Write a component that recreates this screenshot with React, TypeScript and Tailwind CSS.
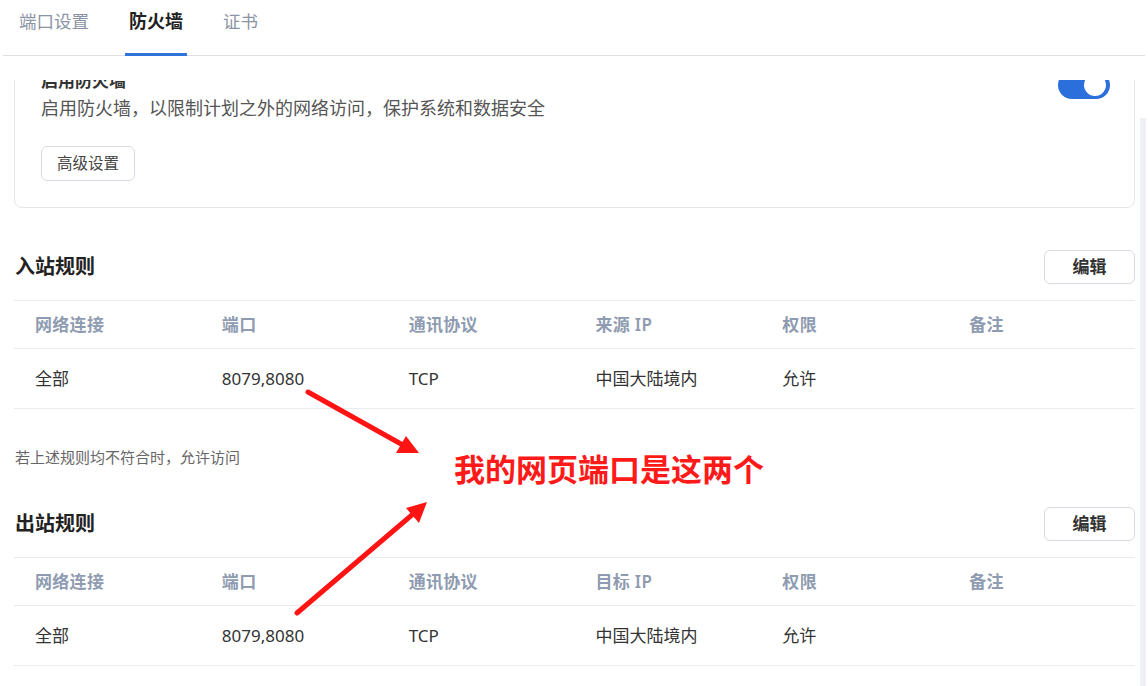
import React from "react";

const cols = ["网络连接", "端口", "通讯协议", "来源 IP", "权限", "备注"];
const cols2 = ["网络连接", "端口", "通讯协议", "目标 IP", "权限", "备注"];
const row = ["全部", "8079,8080", "TCP", "中国大陆境内", "允许", ""];

function RuleTable({ head }: { head: string[] }) {
  return (
    <div className="border-t border-[#e8ebef]">
      <div className="grid grid-cols-6 h-[48px] items-center border-b border-[#e8ebef]">
        {head.map((h, i) => (
          <div key={i} className="pl-[21px] text-[17px] tracking-[0.3px] font-semibold text-[#8e9bb0]">
            {h}
          </div>
        ))}
      </div>
      <div className="grid grid-cols-6 h-[60px] items-center border-b border-[#e8ebef]">
        {row.map((c, i) => (
          <div key={i} className="pl-[21px] text-[17px] text-[#333]">
            {c}
          </div>
        ))}
      </div>
    </div>
  );
}

function Section({ title, head }: { title: string; head: string[] }) {
  return (
    <div>
      <div className="flex items-center justify-between h-[34px]">
        <div className="text-[20px] font-bold text-[#222] pl-[1px]">{title}</div>
        <button className="w-[91px] h-[34px] rounded-md border border-[#d8dce2] bg-white text-[17px] font-bold text-[#333]">
          编辑
        </button>
      </div>
      <div className="mt-[16px]">
        <RuleTable head={head} />
      </div>
    </div>
  );
}

export default function App() {
  return (
    <div
      className="relative w-[1148px] h-[686px] overflow-hidden bg-white"
      style={{ fontFamily: '"Noto Sans", "Noto Sans CJK SC", sans-serif' }}
    >
      {/* Tabs */}
      <div className="h-[56px] border-b border-[#dcdfe4] mr-[3px] ml-[3px] flex items-stretch gap-[32px] pl-[12px]">
        <div className="relative px-1 flex items-start pt-[8px] text-[17.5px] text-[#8a94a4]">端口设置</div>
        <div className="relative px-1 flex items-start pt-[8px] text-[18px] font-bold text-[#222]">
          防火墙
          <div className="absolute left-0 right-0 bottom-[-1px] h-[3px] bg-[#2f74d8]" />
        </div>
        <div className="relative px-1 flex items-start pt-[8px] text-[17.5px] text-[#8a94a4]">证书</div>
      </div>

      <div className="h-[24px]" />

      <div className="flex h-[606px]">
        <div className="w-[1140px] h-full overflow-hidden">
          <div className="-mt-[36px] pl-[14px] pr-[5px]">
            {/* Card */}
            <div className="rounded-lg border border-[#e3e6ea] pt-[24px] pb-[26px] pl-[26px] pr-[24px]">
              <div className="flex items-start justify-between">
                <div>
                  <div className="text-[17px] leading-[24px] font-bold text-[#333]">启用防火墙</div>
                  <div className="mt-[4px] text-[18px] leading-[22px] text-[#555]">
                    启用防火墙，以限制计划之外的网络访问，保护系统和数据安全
                  </div>
                </div>
                <div className="relative mt-[2px] w-[52px] h-[28px] rounded-full bg-[#2a6fdb]">
                  <div className="absolute right-[4px] top-[3px] w-[22px] h-[22px] rounded-full bg-white" />
                </div>
              </div>
              <button className="mt-[27px] h-[35px] w-[94px] rounded-md border border-[#d8dce2] bg-white text-[15.5px] text-[#444]">
                高级设置
              </button>
            </div>

            <div className="mt-[42px]">
              <Section title="入站规则" head={cols} />
            </div>

            <div className="mt-[38px] text-[15px] leading-[20px] text-[#666] pl-[1px]">
              若上述规则均不符合时，允许访问
            </div>

            <div className="mt-[40px]">
              <Section title="出站规则" head={cols2} />
            </div>
          </div>
        </div>
        <div className="w-[6px] mt-[38px] bg-[#eef0f3]" />
      </div>

      {/* Annotation */}
      <svg className="absolute left-0 top-0 pointer-events-none" width="1148" height="686">
        <g stroke="#ff1414" strokeWidth="5" strokeLinecap="round" fill="none">
          <line x1="308" y1="392" x2="410" y2="449" />
          <line x1="297" y1="613" x2="420" y2="508" />
        </g>
        <g fill="#ff1414">
          <polygon points="419,453 396,453 406,436" />
          <polygon points="427,502 406,508 419,523" />
        </g>
      </svg>
      <div className="absolute left-[454px] top-[449px] text-[31px] leading-[40px] font-bold text-[#ff1a1a]">
        我的网页端口是这两个
      </div>
    </div>
  );
}
